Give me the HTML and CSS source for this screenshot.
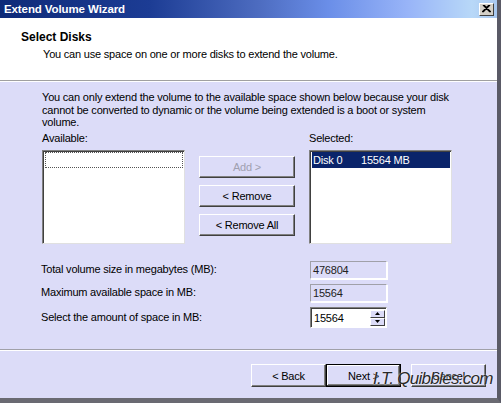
FILE: index.html
```html
<!DOCTYPE html>
<html>
<head>
<meta charset="utf-8">
<link rel="stylesheet" href="styles.css">
</head>
<body>
<div class="window">
  <div class="titlebar">
    <span class="title">Extend Volume Wizard</span>
    <span class="close"><svg width="9" height="8" viewBox="0 0 9 8"><path d="M1 0 L8 7 M8 0 L1 7 M2 0 L9 7 M7 0 L0 7" stroke="#000" stroke-width="1.2" fill="none"/></svg></span>
  </div>
  <div class="header">
    <div class="h-title">Select Disks</div>
    <div class="h-sub">You can use space on one or more disks to extend the volume.</div>
  </div>
  <div class="content">
    <p class="info">You can only extend the volume to the available space shown below because your disk cannot be converted to dynamic or the volume being extended is a boot or system volume.</p>
    <div class="lists">
      <div class="lbl-avail">Available:</div>
      <div class="lbl-sel">Selected:</div>
      <div class="listbox avail"><div class="focus-row"></div></div>
      <div class="btncol">
        <div class="btn disabled">Add &gt;</div>
        <div class="btn">&lt; Remove</div>
        <div class="btn">&lt; Remove All</div>
      </div>
      <div class="listbox sel"><div class="sel-row"><span class="disk">Disk 0</span><span>15564 MB</span></div></div>
    </div>
    <div class="fields">
      <div class="flabel">Total volume size in megabytes (MB):</div>
      <div class="ro">476804</div>
      <div class="flabel">Maximum available space in MB:</div>
      <div class="ro">15564</div>
      <div class="flabel">Select the amount of space in MB:</div>
      <div class="spin">
        <span class="spin-val">15564</span>
        <span class="spin-btns">
          <span class="sb"><svg width="5" height="3" viewBox="0 0 5 3"><path d="M2.5 0 L5 3 L0 3 Z" fill="#000"/></svg></span>
          <span class="sb"><svg width="5" height="3" viewBox="0 0 5 3"><path d="M0 0 L5 0 L2.5 3 Z" fill="#000"/></svg></span>
        </span>
      </div>
    </div>
  </div>
  <div class="footer">
    <div class="fbtn">&lt; Back</div>
    <div class="fbtn default">Next &gt;</div>
    <div class="fbtn cancel">Cancel</div>
    <div class="watermark">I.T. Quibbles.com</div>
  </div>
</div>
</body>
</html>
```
FILE: styles.css
```css
* { box-sizing: border-box; }
html, body { margin: 0; padding: 0; background: #fff; }
body { width: 501px; height: 403px; overflow: hidden; font-family: "Liberation Sans", Arial, sans-serif; font-size: 11px; letter-spacing: -0.2px; color: #000; }
.window {
  width: 501px; height: 403px;
  background: #dcdcf8;
  border-right: 4px solid #5a5a66;
  border-bottom: 5px solid #6a6a72;
  display: flex; flex-direction: column;
  position: relative;
}
.titlebar {
  height: 18px;
  background: linear-gradient(to right, #0e2a78 0%, #1c3c94 30%, #4d6cc0 52%, #6a8ee8 66%, #98b4f8 82%, #b8d8f8 95%, #a8c8f0 100%);
  display: flex; align-items: center; justify-content: space-between;
  padding: 0 3px 0 4px;
}
.title { color: #fff; font-weight: bold; font-size: 11.5px; letter-spacing: -0.1px; }
.close {
  width: 15px; height: 13px; background: #d4d0c8;
  border: 1px solid; border-color: #fff #404040 #404040 #fff;
  display: flex; align-items: center; justify-content: center;
}
.header {
  height: 63px; background: #fff;
  border-bottom: 1px solid #a0a0a0;
  box-shadow: 0 1px 0 #fff;
  padding: 12px 0 0 21px;
}
.h-title { font-weight: bold; font-size: 12px; line-height: 14px; letter-spacing: 0; }
.h-sub { margin: 4px 0 0 22px; line-height: 13px; }
.content { padding: 10px 0 0 42px; height: 269px; border-bottom: 1px solid #a0a0a8; }
.info { margin: 0; width: 416px; line-height: 12.5px; }
.lists {
  display: grid;
  grid-template-columns: 143px 96px 143px;
  grid-template-rows: 18px 94px;
  column-gap: 14px;
  margin-top: 3px;
}
.lists > .lbl-sel { grid-column: 3; }
.lbl-avail, .lbl-sel { line-height: 13px; }
.listbox {
  background: #fff;
  border: 1px solid; border-color: #808080 #e0e0e0 #e0e0e0 #808080;
  box-shadow: inset 1px 1px 0 #404040;
  padding: 1px 1px 0 2px;
}
.focus-row { height: 16px; border: 1px dotted #555; }
.sel-row { height: 16px; background: #0a246a; color: #fff; display: flex; padding-left: 1px; line-height: 16px; }
.sel-row .disk { width: 48px; }
.btncol { display: flex; flex-direction: column; gap: 7px; padding-top: 6px; }
.btn, .fbtn {
  height: 22px; background: #dcdcf8;
  border: 1px solid; border-color: #fff #404040 #404040 #fff;
  box-shadow: inset -1px -1px 0 #808080;
  display: flex; align-items: center; justify-content: center;
}
.btn.disabled { color: #a0a0b0; }
.fields {
  display: grid;
  grid-template-columns: 269px 77px;
  grid-template-rows: 18px 18px 21px;
  row-gap: 5px;
  margin: 17px 0 0 -1px;
  align-items: center;
}
.flabel { line-height: 13px; }
.ro {
  height: 18px; border: 1px solid; border-color: #a0a0a8 #fff #fff #a0a0a8;
  box-shadow: 1px 1px 0 #fff;
  padding: 2px 0 0 2px; color: #222;
}
.spin {
  height: 21px; background: #fff; display: flex; justify-content: space-between;
  border: 1px solid; border-color: #808080 #fff #fff #808080;
  box-shadow: inset 1px 1px 0 #404040;
  padding: 2px 1px 1px 3px;
}
.spin-val { line-height: 16px; }
.spin-btns { display: flex; flex-direction: column; width: 15px; }
.sb {
  flex: 1; background: #dcdcf8; display: flex; align-items: center; justify-content: center;
  border: 1px solid; border-color: #fff #404040 #404040 #fff;
}
.footer {
  flex: 1; border-top: 1px solid #fff;
  display: flex; padding: 13px 0 0 251px;
  position: relative;
}
.fbtn { width: 75px; height: 23px; }
.fbtn.default { border: 1px solid #000; box-shadow: inset -1px -1px 0 #404040, inset 1px 1px 0 #fff, inset -2px -2px 0 #808080; }
.fbtn.cancel { margin-left: 10px; }
.watermark {
  position: absolute; left: 373px; top: 18px;
  white-space: nowrap;
  font-family: "Liberation Sans", Arial, sans-serif; font-style: italic; font-size: 17px;
  color: #2a2a2a; letter-spacing: -0.7px;
  text-shadow: 0 0 2px #fff;
}
```
